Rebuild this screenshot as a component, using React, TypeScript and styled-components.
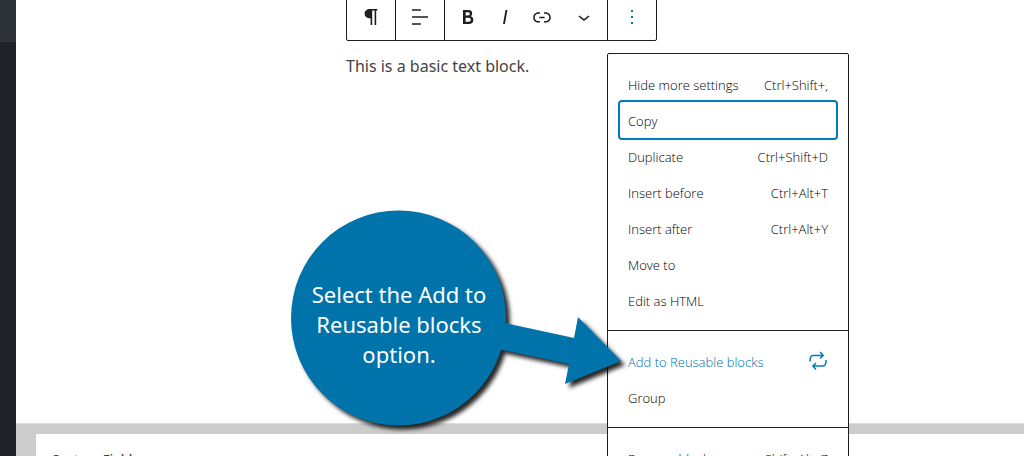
import React from "react";
import styled, { createGlobalStyle } from "styled-components";

const GlobalStyle = createGlobalStyle`
  *, *::before, *::after { box-sizing: border-box; }
  body {
    margin: 0;
    background: #fff;
    color: #1e1e1e;
    font-family: "Open Sans", "Noto Sans", sans-serif;
    font-size: 13px;
  }
  button { font: inherit; color: inherit; }
  p, h2, ul { margin: 0; padding: 0; }
`;

const Page = styled.div`
  display: flex;
  height: 100vh;
  overflow: hidden;
`;

const AdminRail = styled.aside`
  flex: none;
  width: 16px;
  background: #1d2327;
`;

const RailCurrent = styled.div`
  height: 42px;
  background: #2c3338;
`;

const Main = styled.main`
  position: relative;
  flex: 1;
  min-width: 0;
  overflow: hidden;
`;

const Editor = styled.section`
  min-height: 423px;
  padding-left: 330px;
`;

const Toolbar = styled.div`
  display: inline-flex;
  height: 48px;
  margin-top: -7px;
  border: 1px solid #1e1e1e;
  border-radius: 2px;
  background: #fff;
  vertical-align: top;
`;

const ToolGroup = styled.div<{ $inset?: boolean }>`
  position: relative;
  display: flex;
  padding-left: ${(p) => (p.$inset ? "4px" : "0")};

  & + & { border-left: 1px solid #1e1e1e; }
`;

const ToolButton = styled.button<{ $width?: number; $active?: boolean }>`
  display: flex;
  align-items: center;
  justify-content: center;
  width: ${(p) => p.$width ?? 48}px;
  padding: 0;
  border: 0;
  background: none;
  color: ${(p) => (p.$active ? "#007cba" : "#1e1e1e")};
`;

const Glyph = styled.svg`
  flex: none;
  width: 24px;
  height: 24px;
  fill: currentColor;
`;

const Paragraph = styled.p`
  padding-top: 13px;
  color: #444;
  font-family: "Noto Sans", sans-serif;
  font-size: 16px;
  line-height: 24px;
`;

const Menu = styled.div`
  position: absolute;
  top: 59px;
  left: -1px;
  width: 242px;
  border: 1px solid #1e1e1e;
  border-radius: 2px;
  background: #fff;
`;

const MenuSection = styled.div`
  padding: 12px;

  & + & { border-top: 1px solid #1e1e1e; }
`;

const MenuItem = styled.button<{ $focused?: boolean; $accent?: boolean }>`
  display: flex;
  align-items: center;
  justify-content: space-between;
  width: 100%;
  height: 36px;
  padding: 0 8px;
  border: 0;
  border-radius: 2px;
  background: none;
  color: ${(p) => (p.$accent ? "#0070a8" : "#000")};
  box-shadow: ${(p) => (p.$focused ? "0 0 0 2px #007cba" : "none")};
  font-weight: 300;
  white-space: nowrap;

  ${Glyph} {
    margin-right: -2px;
    color: #007cba;
  }
`;

const ItemText = styled.span`
  padding-top: 2px;
`;

const MetaBoxes = styled.section`
  padding: 10px 0 0 20px;
  border-top: 1px solid #ddd;
  background: #ccc;
`;

const MetaBox = styled.div`
  padding: 13px 15px;
  background: #fff;
`;

const MetaTitle = styled.h2`
  color: #3c434a;
  font-size: 13px;
  font-weight: 600;
  line-height: 24px;
`;

const Callout = styled.div`
  position: absolute;
  top: 202px;
  left: 266px;
  width: 352px;
  height: 240px;
  pointer-events: none;
`;

const CalloutShape = styled.svg`
  display: block;
  width: 352px;
  height: 240px;
  fill: #0073aa;
  filter: drop-shadow(4px 4px 2px rgba(0, 0, 0, 0.85));
`;

const CalloutText = styled.p`
  position: absolute;
  top: 77px;
  left: 9px;
  width: 216px;
  color: #fff;
  font-family: "Noto Sans", sans-serif;
  font-size: 22px;
  line-height: 30px;
  text-align: center;
`;

const icons = {
  paragraph: "M18.4 4v1.4h-1.2V20h-1.6V5.4h-2.4V20h-1.6v-6.6c-3.4-.1-6-1.9-6-4.7C5.6 5.8 8 4 11 4z",
  align: "M4 19.8h8.9v-1.5H4v1.5zm8.9-15.6H4v1.5h8.9V4.2zm-8.9 7v1.5h16v-1.5H4z",
  bold: "M14.7 11.3c1-.6 1.5-1.6 1.5-3 0-2.3-1.3-3.4-4-3.4H7v14h5.8c1.4 0 2.5-.3 3.3-1 .8-.7 1.2-1.7 1.2-2.9.1-1.9-.8-3.1-2.6-3.7zm-5.1-4h2.3c.6 0 1.1.1 1.4.4.3.3.5.7.5 1.2s-.2 1-.5 1.2c-.3.3-.8.4-1.4.4H9.6V7.3zm4.6 9c-.4.3-1 .4-1.7.4H9.6v-3.9h2.9c.7 0 1.3.2 1.7.5.4.3.6.8.6 1.5s-.2 1.2-.6 1.5z",
  italic: "M12.5 5L10 19h1.9l2.5-14z",
  link: "M15.6 7.2H14v1.5h1.6c2 0 3.7 1.7 3.7 3.7s-1.7 3.7-3.7 3.7H14v1.5h1.6c2.8 0 5.2-2.3 5.2-5.2 0-2.9-2.3-5.2-5.2-5.2zM4.7 12.4c0-2 1.7-3.7 3.7-3.7H10V7.2H8.4c-2.9 0-5.2 2.3-5.2 5.2 0 2.9 2.3 5.2 5.2 5.2H10v-1.5H8.4c-2 0-3.7-1.7-3.7-3.7zm4.6.9h5.3v-1.5H9.3v1.5z",
  chevron: "M17.5 11.6L12 16l-5.5-4.4.9-1.2L12 14l4.5-3.6 1 1.2z",
  more: "M13 19h-2v-2h2v2zm0-6h-2v-2h2v2zm0-6h-2V5h2v2z",
  reuse: "M7 7.2h8.2L13.5 9l1.1 1.1 3.6-3.6-3.5-4-1.1 1 1.9 2.3H7c-.9 0-1.7.3-2.3.9-1.4 1.5-1.4 4.2-1.4 5.6v.2h1.5v-.3c0-1.1 0-3.5 1-4.5.3-.3.7-.5 1.2-.5zm13.8 4V11h-1.5v.3c0 1.1 0 3.5-1 4.5-.3.3-.7.5-1.3.5H8.8l1.7-1.7-1.1-1.1L5.9 17l3.5 4 1.1-1-1.9-2.3H17c.9 0 1.7-.3 2.3-.9 1.5-1.4 1.5-4.2 1.5-5.6z",
};

const Icon = ({ name }: { name: keyof typeof icons }) => (
  <Glyph viewBox="0 0 24 24" aria-hidden="true">
    <path d={icons[name]} />
  </Glyph>
);

type Item = { label: string; shortcut?: string; icon?: keyof typeof icons; focused?: boolean; accent?: boolean };

const sections: Item[][] = [
  [
    { label: "Hide more settings", shortcut: "Ctrl+Shift+," },
    { label: "Copy", focused: true },
    { label: "Duplicate", shortcut: "Ctrl+Shift+D" },
    { label: "Insert before", shortcut: "Ctrl+Alt+T" },
    { label: "Insert after", shortcut: "Ctrl+Alt+Y" },
    { label: "Move to" },
    { label: "Edit as HTML" },
  ],
  [
    { label: "Add to Reusable blocks", icon: "reuse", accent: true },
    { label: "Group" },
  ],
  [{ label: "Remove block", shortcut: "Shift+Alt+Z" }],
];

export default function App() {
  return (
    <Page>
      <GlobalStyle />
      <AdminRail>
        <RailCurrent />
      </AdminRail>
      <Main>
        <Editor>
          <Toolbar role="toolbar" aria-label="Block tools">
            <ToolGroup>
              <ToolButton aria-label="Paragraph"><Icon name="paragraph" /></ToolButton>
            </ToolGroup>
            <ToolGroup>
              <ToolButton aria-label="Align"><Icon name="align" /></ToolButton>
            </ToolGroup>
            <ToolGroup $inset>
              <ToolButton $width={37} aria-label="Bold"><Icon name="bold" /></ToolButton>
              <ToolButton $width={37} aria-label="Italic"><Icon name="italic" /></ToolButton>
              <ToolButton $width={37} aria-label="Link"><Icon name="link" /></ToolButton>
              <ToolButton $width={47} aria-label="More rich text controls"><Icon name="chevron" /></ToolButton>
            </ToolGroup>
            <ToolGroup>
              <ToolButton $active aria-label="More options" aria-expanded="true"><Icon name="more" /></ToolButton>
              <Menu role="menu">
                {sections.map((items, i) => (
                  <MenuSection key={i} role="group">
                    {items.map((item) => (
                      <MenuItem key={item.label} role="menuitem" $focused={item.focused} $accent={item.accent}>
                        <ItemText>{item.label}</ItemText>
                        {item.shortcut && <ItemText>{item.shortcut}</ItemText>}
                        {item.icon && <Icon name={item.icon} />}
                      </MenuItem>
                    ))}
                  </MenuSection>
                ))}
              </Menu>
            </ToolGroup>
          </Toolbar>
          <Paragraph>This is a basic text block.</Paragraph>
        </Editor>
        <MetaBoxes>
          <MetaBox>
            <MetaTitle>Custom Fields</MetaTitle>
          </MetaBox>
        </MetaBoxes>
        <Callout>
          <CalloutShape viewBox="0 0 352 240" aria-hidden="true">
            <circle cx="116.5" cy="116" r="107.5" />
            <path d="M218 120L292 136 296 115 339 159 283 182 287 162 216 147z" />
          </CalloutShape>
          <CalloutText>Select the Add to Reusable blocks option.</CalloutText>
        </Callout>
      </Main>
    </Page>
  );
}
